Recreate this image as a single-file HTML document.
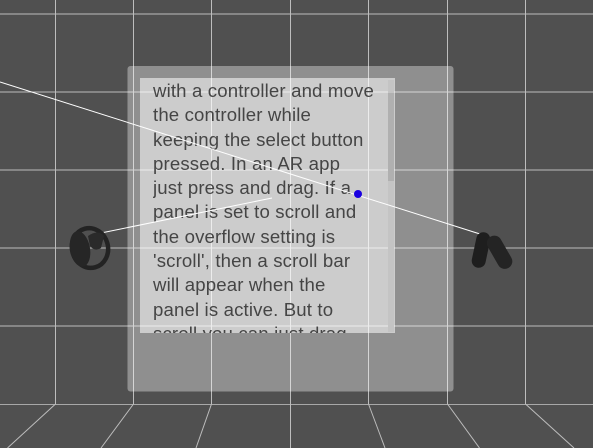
<!DOCTYPE html>
<html><head><style>
html,body{margin:0;padding:0;width:593px;height:448px;overflow:hidden;background:#505050}
svg{position:absolute;left:0;top:0}
.txt{position:absolute;left:153px;top:79px;width:240px;height:254px;overflow:hidden;font-family:"Liberation Sans",sans-serif;font-size:18.6px;letter-spacing:0.15px;line-height:24.3px;color:#454545;white-space:nowrap}
</style></head><body>
<svg width="593" height="448">
<g stroke="#bdbdbd" stroke-width="1" fill="none">
<line x1="0" y1="14" x2="593" y2="14"/>
<line x1="0" y1="92" x2="593" y2="92"/>
<line x1="0" y1="170" x2="593" y2="170"/>
<line x1="0" y1="248" x2="593" y2="248"/>
<line x1="0" y1="326" x2="593" y2="326"/>
<line x1="0" y1="404.5" x2="593" y2="404.5" stroke="#a8a8a8"/>
<line x1="55.5" y1="0" x2="55.5" y2="404"/>
<line x1="133.5" y1="0" x2="133.5" y2="404"/>
<line x1="211.5" y1="0" x2="211.5" y2="404"/>
<line x1="290.5" y1="0" x2="290.5" y2="448"/>
<line x1="368.5" y1="0" x2="368.5" y2="404"/>
<line x1="447.5" y1="0" x2="447.5" y2="404"/>
<line x1="525.5" y1="0" x2="525.5" y2="404"/>
<line x1="55.5" y1="404" x2="7.5" y2="448"/>
<line x1="133.5" y1="404" x2="101" y2="448"/>
<line x1="211.5" y1="404" x2="196" y2="448"/>
<line x1="368.5" y1="404" x2="385" y2="448"/>
<line x1="447.5" y1="404" x2="479.5" y2="448"/>
<line x1="525.5" y1="404" x2="574" y2="448"/>
</g>
<rect x="127.5" y="66" width="326" height="325.5" rx="3" fill="#fff" fill-opacity="0.36"/>
<rect x="140" y="78" width="255" height="255" fill="#fff" fill-opacity="0.55"/>
<rect x="388" y="80" width="6" height="252" fill="#c4c4c4"/>
<rect x="388" y="93" width="6" height="88" fill="#b0b0b0"/>
</svg>
<div class="txt">with a controller and move<br>the controller while<br>keeping the select button<br>pressed. In an AR app<br>just press and drag. If a<br>panel is set to scroll and<br>the overflow setting is<br>'scroll', then a scroll bar<br>will appear when the<br>panel is active. But to<br>scroll you can just drag</div>
<svg width="593" height="448">
<line x1="0" y1="82" x2="480" y2="234" stroke="#fff" stroke-width="1"/>
<line x1="101" y1="233" x2="272" y2="198" stroke="#fff" stroke-width="1"/>
<circle cx="358" cy="194" r="4" fill="#1a00e0"/>
<ellipse cx="90" cy="248" rx="18" ry="20" fill="none" stroke="#232323" stroke-width="4.5" transform="rotate(-15 90 248)"/>
<ellipse cx="80" cy="249" rx="10" ry="18" fill="#262626" transform="rotate(-10 80 249)"/>
<path d="M88 236 Q98 229 104 236 L101 248 Q95 252 90 246 Z" fill="#2a2a2a"/>
<rect x="474" y="232" width="14" height="36" rx="7" fill="#1e1e1e" transform="rotate(12 481 250)"/>
<rect x="492" y="234" width="15" height="36" rx="7.5" fill="#242424" transform="rotate(-30 500 252)"/>
</svg>
</body></html>
